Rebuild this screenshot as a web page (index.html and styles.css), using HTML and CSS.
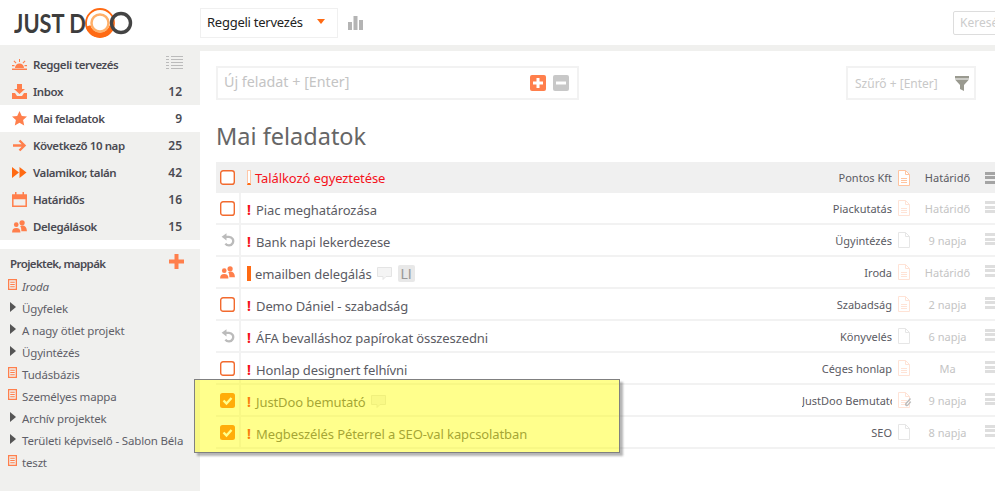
FILE: index.html
```html
<!DOCTYPE html>
<html lang="hu">
<head>
<meta charset="utf-8">
<title>JustDoo</title>
<link rel="stylesheet" href="styles.css">
</head>
<body>
<svg class="defs" width="0" height="0" aria-hidden="true">
  <symbol id="doc" viewBox="0 0 12 16"><path d="M.5.5h7l4 4v11H.5z" fill="#fff" stroke="currentColor"/><path d="M7.5.5v4h4" fill="none" stroke="currentColor"/></symbol>
  <symbol id="docl" viewBox="0 0 12 16"><path d="M.5.5h7l4 4v11H.5z" fill="#fff" stroke="currentColor"/><path d="M7.5.5v4h4M3 8.500h6M3 10.500h6M3 12.500h6" fill="none" stroke="currentColor"/></symbol>
  <symbol id="list" viewBox="0 0 10 12"><path d="M.7.7h8.600v10.600H.7z" fill="none" stroke="#ff7f4c" stroke-width="1.400"/><path d="M2.500 3.500h5M2.500 6h5M2.500 8.500h5" stroke="#ff7f4c" stroke-width="1.300"/></symbol>
  <symbol id="tri" viewBox="0 0 6 10"><path d="M0 0l6 5-6 5z" fill="#555"/></symbol>
  <symbol id="undo" viewBox="0 0 14 14"><path d="M4.200 3.800H8a4.300 4.300 0 1 1-3.600 6.800" fill="none" stroke="#bbb" stroke-width="2.300"/><path d="M5.500.2v7.200L.6 3.800z" fill="#bbb"/></symbol>
  <symbol id="people" viewBox="0 0 16 14"><circle cx="4.500" cy="5" r="2.500" fill="#ff7f4c"/><circle cx="10.800" cy="3" r="2.800" fill="#ff7f4c"/><path d="M0 13.500c0-3.500 1.500-5 4.500-5s4.500 1.500 4.500 5z" fill="#ff7f4c"/><path d="M10 12h6c0-4-2-6-5-6-1 0-1.700.2-2.300.6 1 1 1.300 3 1.300 5.400z" fill="#ff7f4c"/></symbol>
  <symbol id="bubble" viewBox="0 0 15 13"><path d="M.5.5h14v9H9l-3 3v-3H.5z" fill="#f4f4f4" stroke="#e4e4e4"/></symbol>
  <symbol id="check" viewBox="0 0 15 15"><rect width="15" height="15" rx="2.500" fill="#ff6a13"/><path d="M3.500 7.500l3 3 5-5.500" fill="none" stroke="#fff" stroke-width="2.400"/></symbol>
  <symbol id="box" viewBox="0 0 15 15"><rect x=".7" y=".7" width="13.600" height="13.600" rx="2.400" fill="#fff" stroke="#f26a2e" stroke-width="1.400"/></symbol>
</svg>

<header class="topbar">
  <div class="logo">
    <span class="logo-text">JUST D</span>
    <svg class="logo-oo" viewBox="0 0 50 34" width="50" height="34" role="img" aria-label="OO">
      <circle cx="15" cy="17" r="14" fill="none" stroke="#ff6a13" stroke-width="1.800"/>
      <path d="M3 20a12.500 12.500 0 0 0 24 0" fill="none" stroke="#ff6a13" stroke-width="5"/>
      <circle cx="15" cy="17" r="8.500" fill="none" stroke="#ffb06a" stroke-width="2.500"/>
      <circle cx="36" cy="17" r="9.500" fill="none" stroke="#444" stroke-width="3.400"/>
    </svg>
  </div>
  <div class="view-select">
    <span>Reggeli tervezés</span>
    <svg class="caret" width="8" height="5" viewBox="0 0 8 5"><path d="M0 0h8L4 5z" fill="#ff6a13"/></svg>
  </div>
  <svg class="chart" width="15" height="14" viewBox="0 0 15 14" aria-hidden="true"><path d="M0 6h4v8H0zM5.500 0h4v14h-4zM11 4h4v10h-4z" fill="#b4b4b4"/></svg>
  <div class="search">Keresés</div>
</header>

<div class="page">
  <aside class="sidebar">
    <nav class="nav">
      <a class="nav-item">
        <svg class="nav-ico" width="15" height="12" viewBox="0 0 15 12"><path d="M3 9a4.500 4.500 0 0 1 9 0zM0 9.500h15V11H0zM7 0h1v3H7zM2.300 1.500l2.200 2.300-.8.700-2.200-2.300zM12.700 1.500l-2.200 2.300.8.700 2.200-2.300zM0 6h2.500v1.200H0zM12.500 6H15v1.200h-2.500z" fill="#ff7f4c"/></svg>
        <span class="nav-label">Reggeli tervezés</span>
        <svg class="nav-list" width="17" height="14" viewBox="0 0 17 14"><path d="M0 .5h3M5 .5h12M0 3.500h3M5 3.500h12M0 6.500h3M5 6.500h12M0 9.500h3M5 9.500h12M0 12.500h3M5 12.500h12" stroke="#bbb"/></svg>
      </a>
      <a class="nav-item">
        <svg class="nav-ico" width="15" height="15" viewBox="0 0 15 15"><path d="M5 0h5v5h3L7.500 10 2 5h3z" fill="#ff7f4c"/><path d="M0 9h3l2 3h5l2-3h3v6H0z" fill="#ff7f4c"/></svg>
        <span class="nav-label">Inbox</span><span class="nav-count">12</span>
      </a>
      <a class="nav-item is-active">
        <svg class="nav-ico" width="15" height="15" viewBox="0 0 15 15"><path d="M7.500 0l2.300 5 5.200.6-3.900 3.500 1.100 5.400-4.700-2.700-4.700 2.700 1.100-5.400L0 5.600 5.200 5z" fill="#ff7f4c"/></svg>
        <span class="nav-label">Mai feladatok</span><span class="nav-count">9</span>
      </a>
      <a class="nav-item">
        <svg class="nav-ico" width="15" height="13" viewBox="0 0 15 13"><path d="M1 6.500h11M7.500 1.500l5 5-5 5" fill="none" stroke="#ff7f4c" stroke-width="2.400"/></svg>
        <span class="nav-label">Következő 10 nap</span><span class="nav-count">25</span>
      </a>
      <a class="nav-item">
        <svg class="nav-ico" width="15" height="11" viewBox="0 0 15 11"><path d="M0 0l7 5.500L0 11zM7.500 0l7 5.500-7 5.500z" fill="#ff6a13"/></svg>
        <span class="nav-label">Valamikor, talán</span><span class="nav-count">42</span>
      </a>
      <a class="nav-item">
        <svg class="nav-ico" width="15" height="15" viewBox="0 0 15 15"><path d="M.8 3h13.400v11.200H.8zM0 6.500h15" fill="none" stroke="#ff7f4c" stroke-width="1.500"/><path d="M3 0h1.500v4H3zM10.500 0H12v4h-1.500zM0 3h15v3.500H0z" fill="#ff7f4c"/></svg>
        <span class="nav-label">Határidős</span><span class="nav-count">16</span>
      </a>
      <a class="nav-item">
        <svg class="nav-ico" width="15" height="13"><use href="#people"/></svg>
        <span class="nav-label">Delegálások</span><span class="nav-count">15</span>
      </a>
    </nav>
    <section class="projects">
      <div class="projects-head">
        <span>Projektek, mappák</span>
        <svg class="add" width="15" height="15" viewBox="0 0 15 15"><path d="M5.500 0h4v5.500H15v4H9.500V15h-4V9.500H0v-4h5.500z" fill="#ff7f4c"/></svg>
      </div>
      <ul class="tree">
        <li class="leaf"><svg class="ti-doc"><use href="#list"/></svg><em>Iroda</em></li>
        <li class="node"><svg class="ti-tri"><use href="#tri"/></svg>Ügyfelek</li>
        <li class="node"><svg class="ti-tri"><use href="#tri"/></svg>A nagy ötlet projekt</li>
        <li class="node"><svg class="ti-tri"><use href="#tri"/></svg>Ügyintézés</li>
        <li class="leaf"><svg class="ti-doc"><use href="#list"/></svg>Tudásbázis</li>
        <li class="leaf"><svg class="ti-doc"><use href="#list"/></svg>Személyes mappa</li>
        <li class="node"><svg class="ti-tri"><use href="#tri"/></svg>Archív projektek</li>
        <li class="node"><svg class="ti-tri"><use href="#tri"/></svg>Területi képviselő - Sablon Béla</li>
        <li class="leaf"><svg class="ti-doc"><use href="#list"/></svg>teszt</li>
      </ul>
    </section>
  </aside>

  <main class="main">
    <div class="tools">
      <div class="new-task">
        <span class="new-ph">Új feladat + [Enter]</span>
        <svg class="sq" width="16" height="16" viewBox="0 0 16 16"><rect width="16" height="16" rx="2" fill="#ff7f4c"/><path d="M6.500 3h3v3.500H13v3H9.500V13h-3V9.500H3v-3h3.500z" fill="#fff"/></svg>
        <svg class="sq" width="16" height="16" viewBox="0 0 16 16"><rect width="16" height="16" rx="2" fill="#c8c8c8"/><path d="M3 6.500h10v3H3z" fill="#fff"/></svg>
      </div>
      <div class="filter">
        <span class="filter-ph">Szűrő + [Enter]</span>
        <svg width="14" height="15" viewBox="0 0 14 15"><path d="M0 0h14v2.500H0zM0 3.500h14L9 9v6l-4-2V9z" fill="#9a9a90"/></svg>
      </div>
    </div>
    <h1 class="title">Mai feladatok</h1>
    <div class="tasks">
      <div class="task is-head">
        <span class="t-state"><svg class="box"><use href="#box"/></svg></span>
        <span class="t-name"><i class="flag flag-hollow"></i><span class="urgent">Találkozó egyeztetése</span></span>
        <span class="t-proj">Pontos Kft</span>
        <svg class="t-doc orange"><use href="#docl"/></svg>
        <span class="t-date dark">Határidő</span>
        <i class="t-menu dark-menu"></i>
      </div>
      <div class="task">
        <span class="t-state"><svg class="box"><use href="#box"/></svg></span>
        <span class="t-name"><b class="excl">!</b>Piac meghatározása</span>
        <span class="t-proj">Piackutatás</span>
        <svg class="t-doc pale"><use href="#docl"/></svg>
        <span class="t-date">Határidő</span>
        <i class="t-menu"></i>
      </div>
      <div class="task">
        <span class="t-state"><svg width="14" height="14"><use href="#undo"/></svg></span>
        <span class="t-name"><b class="excl">!</b>Bank napi lekerdezese</span>
        <span class="t-proj">Ügyintézés</span>
        <svg class="t-doc"><use href="#doc"/></svg>
        <span class="t-date">9 napja</span>
        <i class="t-menu"></i>
      </div>
      <div class="task">
        <span class="t-state"><svg width="15" height="13"><use href="#people"/></svg></span>
        <span class="t-name"><i class="flag"></i>emailben delegálás<svg class="bubble" width="15" height="13"><use href="#bubble"/></svg><span class="tag">LI</span></span>
        <span class="t-proj">Iroda</span>
        <svg class="t-doc pale"><use href="#docl"/></svg>
        <span class="t-date">Határidő</span>
        <i class="t-menu"></i>
      </div>
      <div class="task">
        <span class="t-state"><svg class="box"><use href="#box"/></svg></span>
        <span class="t-name"><b class="excl">!</b>Demo Dániel - szabadság</span>
        <span class="t-proj">Szabadság</span>
        <svg class="t-doc pale"><use href="#docl"/></svg>
        <span class="t-date">2 napja</span>
        <i class="t-menu"></i>
      </div>
      <div class="task">
        <span class="t-state"><svg width="14" height="14"><use href="#undo"/></svg></span>
        <span class="t-name"><b class="excl">!</b>ÁFA bevalláshoz papírokat összeszedni</span>
        <span class="t-proj">Könyvelés</span>
        <svg class="t-doc"><use href="#doc"/></svg>
        <span class="t-date">6 napja</span>
        <i class="t-menu"></i>
      </div>
      <div class="task">
        <span class="t-state"><svg class="box"><use href="#box"/></svg></span>
        <span class="t-name"><b class="excl">!</b>Honlap designert felhívni</span>
        <span class="t-proj">Céges honlap</span>
        <svg class="t-doc pale"><use href="#docl"/></svg>
        <span class="t-date">Ma</span>
        <i class="t-menu"></i>
      </div>
      <div class="task">
        <span class="t-state"><svg width="15" height="15"><use href="#check"/></svg></span>
        <span class="t-name"><b class="excl">!</b>JustDoo bemutató<svg class="bubble" width="15" height="13"><use href="#bubble"/></svg></span>
        <span class="t-proj">JustDoo Bemutató</span>
        <span class="doc-clip">
          <svg class="t-doc pale"><use href="#docl"/></svg>
          <svg class="clip" width="8" height="10" viewBox="0 0 8 10"><path d="M6.500 1.500L2 6.500a1.200 1.200 0 0 0 1.800 1.600l3-3.500" fill="none" stroke="#bbb" stroke-width="1.400"/></svg>
        </span>
        <span class="t-date">9 napja</span>
        <i class="t-menu"></i>
      </div>
      <div class="task">
        <span class="t-state"><svg width="15" height="15"><use href="#check"/></svg></span>
        <span class="t-name"><b class="excl">!</b>Megbeszélés Péterrel a SEO-val kapcsolatban</span>
        <span class="t-proj">SEO</span>
        <svg class="t-doc"><use href="#doc"/></svg>
        <span class="t-date">8 napja</span>
        <i class="t-menu"></i>
      </div>
    </div>
  </main>
</div>
<div class="highlight"></div>
</body>
</html>
```
FILE: styles.css
```css
* { box-sizing: border-box; }
html, body { height: 100%; }
body {
  margin: 0;
  height: 491px;
  overflow: hidden;
  background: #fff;
  color: #555;
  font-family: "Noto Sans", "Open Sans", sans-serif;
  font-size: 12px;
  position: relative;
}
.defs { position: absolute; }
ul { list-style: none; margin: 0; padding: 0; }

.topbar { height: 45px; display: flex; align-items: center; }
.logo { width: 200px; padding-left: 14px; display: flex; align-items: center; height: 45px; }
.logo-text { width: 71px; flex: none; font-family: "Lato", sans-serif; font-weight: 700; font-size: 26px; color: #3d3d3d; white-space: pre; transform: scaleX(.84); transform-origin: left center; }
.logo-oo { flex: none; }
.view-select {
  width: 138px; height: 30px; border: 1px solid #f0f0f0;
  display: flex; align-items: center; padding: 0 0 2px 6px;
  color: #222; font-size: 13px; letter-spacing: -.25px;
}
.view-select span { width: 110px; white-space: nowrap; }
.chart { margin-left: 10px; }
.search {
  margin-left: auto; margin-right: -40px; width: 82px; height: 24px;
  border: 1px solid #ddd; border-radius: 2px; color: #ccc;
  font-size: 12px; line-height: 22px; padding-left: 6px;
}

.page { display: flex; height: 446px; }
.sidebar { width: 200px; flex: none; display: flex; flex-direction: column; }
.nav { height: 195px; background: #f0f0ee; padding-top: 6px; }
.nav-item { display: flex; align-items: center; height: 27px; padding-left: 12px; padding-right: 18px; color: #4a4a52; font-weight: 600; font-size: 11.500px; }
.nav-item.is-active { background: #fff; }
.nav-ico { flex: none; margin-right: 6px; width: 15px; }
.nav-label { flex: 1; white-space: nowrap; letter-spacing: -.42px; }
.nav-count { font-size: 12px; }
.nav-list { margin-top: -4px; margin-right: -1px; }
.projects { margin-top: 9px; flex: 1; background: #f0f0ee; }
.projects-head {
  height: 26px; display: flex; align-items: center; justify-content: space-between;
  padding: 2px 16px 0 10px; color: #4a4a52; font-weight: 600; font-size: 11.500px; letter-spacing: -.6px;
}
.add { margin-top: -3px; }
.tree li { height: 22px; display: flex; align-items: center; color: #5f5f68; font-size: 11.500px; letter-spacing: -.17px; white-space: nowrap; }
.tree em { font-style: italic; }
.ti-doc { width: 9px; height: 11px; margin: -3px 5px 0 8px; flex: none; }
.ti-tri { width: 6px; height: 10px; margin: -3px 6px 0 10px; flex: none; }

.main { flex: 1; min-width: 0; border-top: 6px solid #f0f0ee; padding: 15px 0 0 16px; overflow: hidden; }
.tools { display: flex; justify-content: space-between; padding-right: 19px; }
.new-task {
  width: 363px; height: 34px; border: 2px solid #f2f2f2;
  display: flex; align-items: center; padding: 0 8px 0 6px; gap: 7px;
}
.new-ph { flex: 1; color: #c4c4c4; font-size: 14.300px; padding-bottom: 3px; }
.filter {
  width: 130px; height: 34px; border: 2px solid #f2f2f2;
  display: flex; align-items: center; justify-content: space-between; padding: 0 5px 0 7px;
}
.filter-ph { color: #c8c8c8; font-size: 12px; }
.title { margin: 19px 0 0; height: 43px; font-size: 23.500px; font-weight: 400; color: #666; line-height: 34px; }

.tasks { width: 783px; }
.task { display: flex; align-items: center; height: 32px; border-bottom: 2px solid #f2f2f2; color: #5b5b63; font-size: 13px; }
.task.is-head { height: 31px; background: #f0f0f0; border-bottom: 0; }
.t-state { width: 25px; height: 100%; flex: none; display: flex; align-items: center; justify-content: center; border-right: 2px solid #f2f2f2; }
.is-head .t-state { border-right-color: transparent; }
.box { width: 15px; height: 15px; }
.t-name { flex: 1; min-width: 0; display: flex; align-items: center; padding: 3px 0 0 6px; white-space: nowrap; letter-spacing: -.1px; }
.is-head .t-name { padding-top: 0; }
.excl { color: #f5121b; font-weight: 700; width: 9px; font-size: 14px; }
.flag { width: 4px; height: 15px; background: #ff6a13; margin-right: 4px; }
.flag-hollow { background: #fff; border: 1px solid #ffc7a8; border-bottom: 2px solid #ff6a13; }
.urgent { color: #f5121b; }
.bubble { margin-left: 5px; }
.tag { margin-left: 6px; background: #e8e8e8; color: #999; border-radius: 2px; height: 17px; line-height: 17px; padding: 0 3px; font-family: "Lato", sans-serif; font-size: 14px; }
.t-proj { width: 90px; flex: none; text-align: right; white-space: nowrap; overflow: hidden; font-size: 11px; color: #5b5b63; padding-top: 1px; }
.is-head .t-proj, .is-head .t-date { padding-top: 0; }
.t-doc { width: 12px; height: 16px; margin-left: 6px; flex: none; color: #e6e6e6; }
.t-doc.pale { color: #ffe3d6; }
.t-doc.orange { color: #ffc4a0; }
.doc-clip { position: relative; display: flex; flex: none; }
.clip { position: absolute; right: -2px; bottom: 1px; }
.t-date { width: 75px; flex: none; text-align: center; font-size: 11px; color: #c4c4c4; padding-top: 1px; }
.t-date.dark { color: #5b5b63; }
.t-menu { width: 14px; height: 12px; flex: none; margin-top: -2px; background: repeating-linear-gradient(#dedede 0 3px, transparent 3px 4.500px); }
.dark-menu { margin-top: 0; background: repeating-linear-gradient(#a4a4a4 0 3px, transparent 3px 4.500px); }

.highlight {
  position: absolute; left: 194px; top: 379px; width: 426px; height: 74px;
  background: rgba(255, 255, 0, .45);
  border: 1px solid #808080;
  box-shadow: 3px 3px 2px rgba(90, 90, 90, .45);
}
```
